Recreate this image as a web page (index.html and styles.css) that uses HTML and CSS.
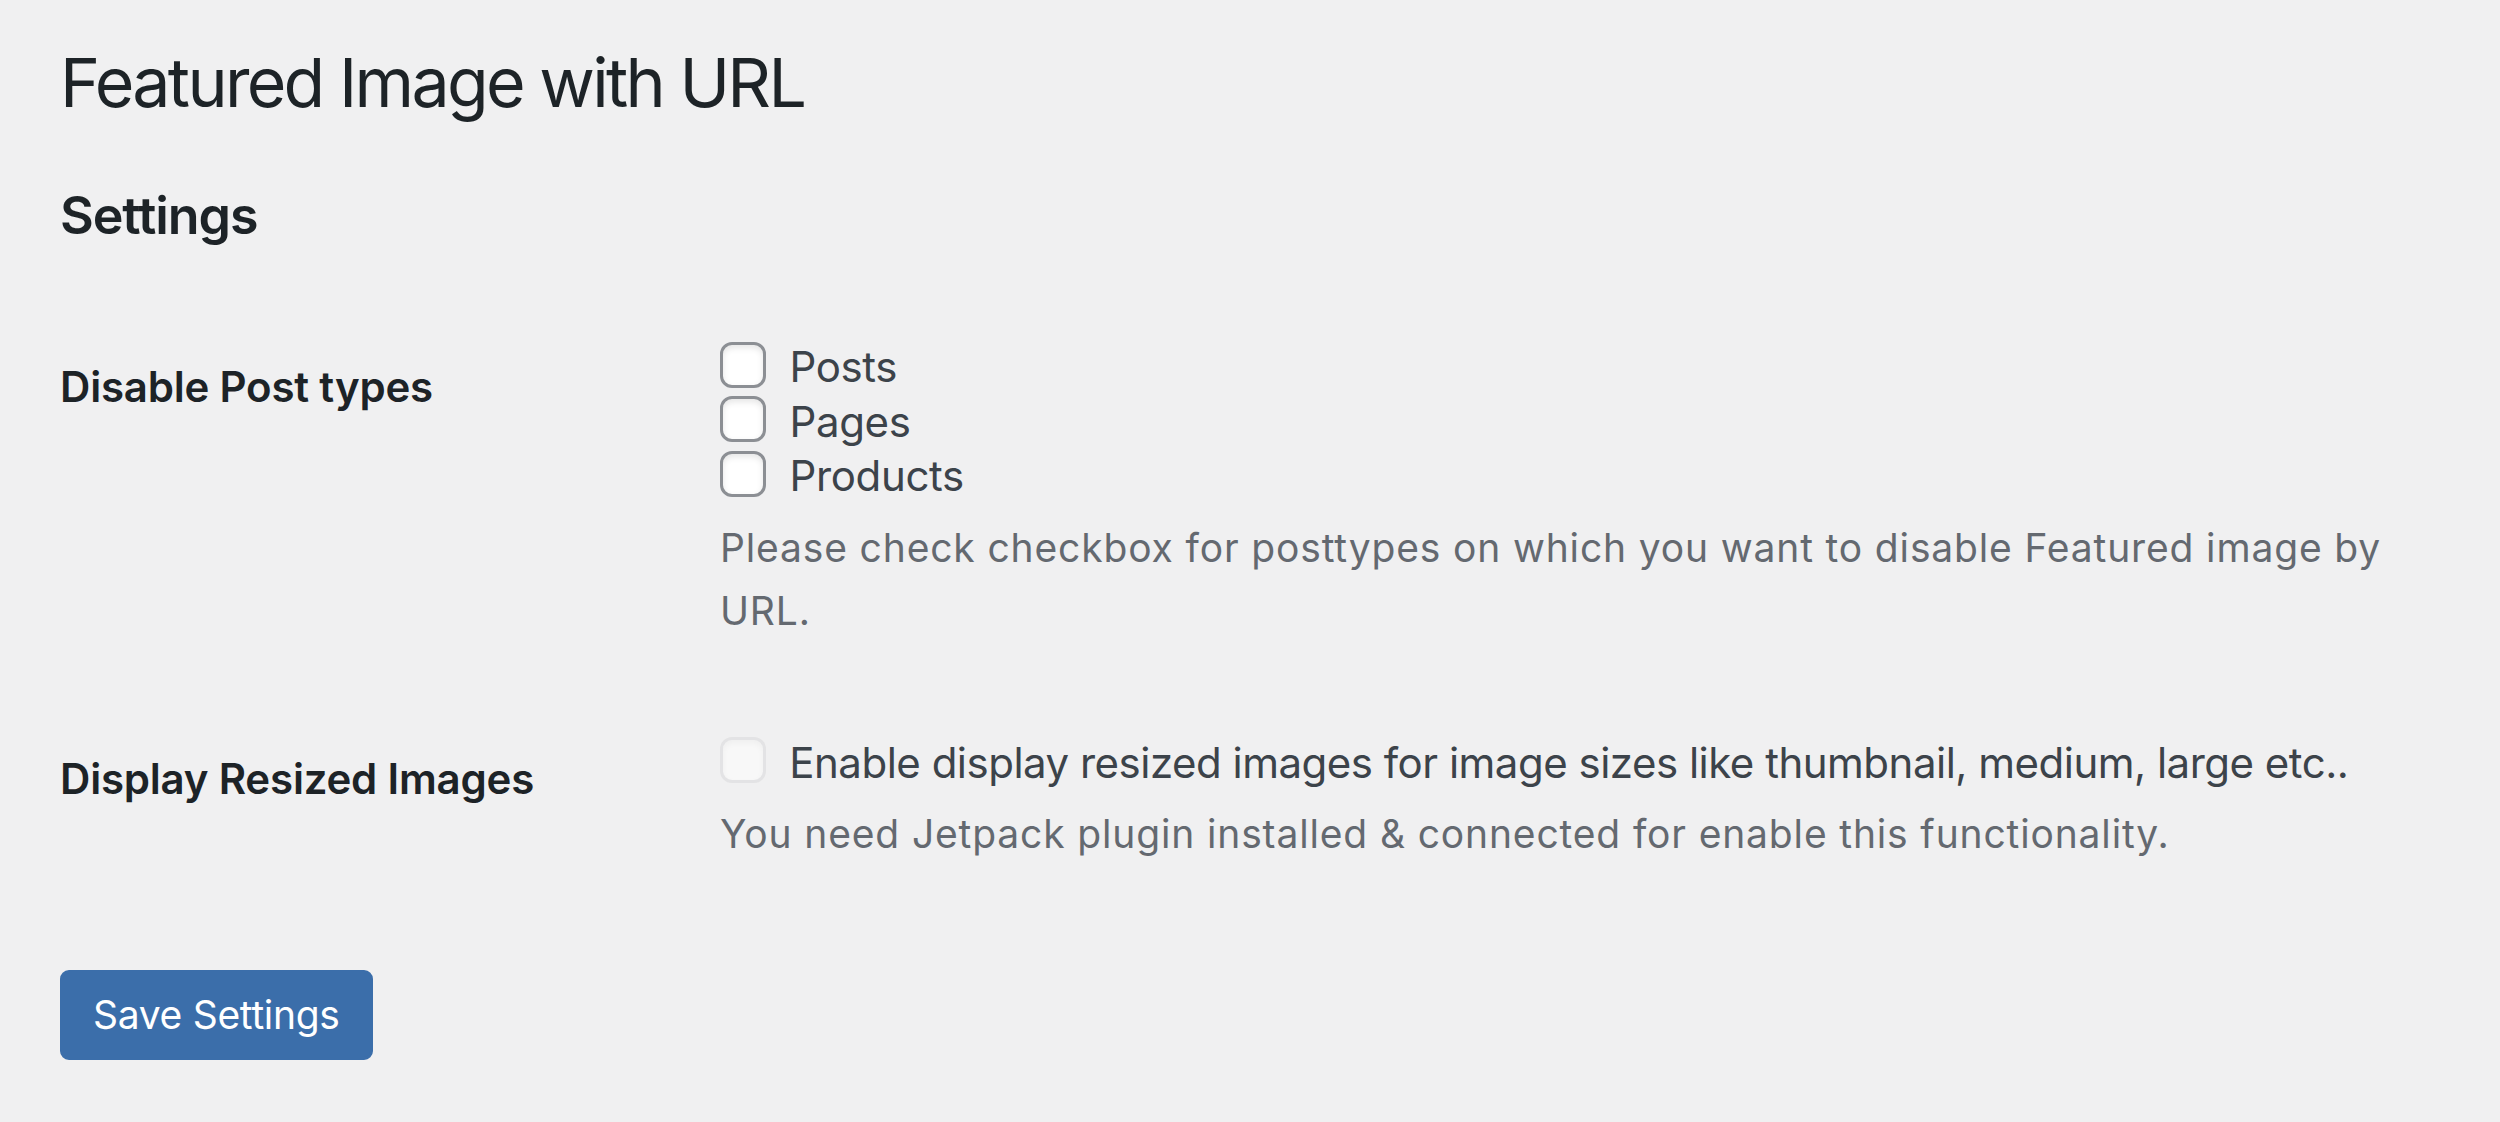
FILE: index.html
```html
<!DOCTYPE html>
<html lang="en">
<head>
<meta charset="utf-8">
<title>Featured Image with URL</title>
<link rel="stylesheet" href="styles.css">
</head>
<body>
<div class="wrap">
  <h1 class="page-title">Featured Image with URL</h1>
  <h2 class="section-title">Settings</h2>
  <form class="settings-form">
    <table class="form-table">
      <tbody>
        <tr>
          <th class="row-label" scope="row">Disable Post types</th>
          <td class="row-field">
            <label class="option"><input type="checkbox" class="cb"> Posts</label><br>
            <label class="option"><input type="checkbox" class="cb"> Pages</label><br>
            <label class="option"><input type="checkbox" class="cb"> Products</label>
            <p class="description">Please check checkbox for posttypes on which you want to disable Featured image by URL.</p>
          </td>
        </tr>
        <tr>
          <th class="row-label" scope="row">Display Resized Images</th>
          <td class="row-field row-field-single">
            <label class="option option-long"><input type="checkbox" class="cb" disabled> Enable display resized images for image sizes like thumbnail, medium, large etc..</label>
            <p class="description">You need Jetpack plugin installed &amp; connected for enable this functionality.</p>
          </td>
        </tr>
      </tbody>
    </table>
    <p class="submit"><button type="button" class="button-primary">Save Settings</button></p>
  </form>
</div>
</body>
</html>
```
FILE: styles.css
```css
html, body {
  margin: 0;
  padding: 0;
  background: #f0f0f1;
}

body {
  font-family: Inter, "Liberation Sans", sans-serif;
  color: #3c434a;
}

.wrap {
  padding: 38px 60px 0 60px;
}

.page-title {
  margin: 0;
  font-size: 68px;
  font-weight: 400;
  line-height: 88px;
  letter-spacing: -2.7px;
  color: #1d2327;
}

.section-title {
  margin: 62px 0 0 0;
  font-size: 52px;
  font-weight: 600;
  line-height: 56px;
  letter-spacing: -1.1px;
  color: #1d2327;
}

.settings-form {
  margin: 0;
}

.form-table {
  margin-top: 51px;
  width: 100%;
  border-collapse: collapse;
  border-spacing: 0;
}

.row-label {
  width: 600px;
  padding: 65px 30px 60px 0;
  text-align: left;
  vertical-align: top;
  font-size: 42px;
  line-height: 54.6px;
  font-weight: 600;
  letter-spacing: -0.2px;
  color: #1d2327;
}

.row-field {
  padding: 45px 30px;
  vertical-align: top;
  font-size: 42px;
  line-height: 54.6px;
  color: #3c434a;
}

.row-field-single {
  padding-top: 49px;
}

.option {
  color: #3c434a;
  letter-spacing: -0.35px;
}

.option-long {
  letter-spacing: -0.5px;
}

.cb {
  appearance: none;
  -webkit-appearance: none;
  box-sizing: border-box;
  width: 46px;
  height: 46px;
  margin: -12px 12px 0 0;
  border: 3px solid #8c8f94;
  border-radius: 12px;
  background: #fff;
  box-shadow: inset 0 3px 6px rgba(0, 0, 0, 0.1);
  vertical-align: middle;
}

.cb:disabled {
  border-color: rgba(220, 220, 222, 0.75);
  background: rgba(255, 255, 255, 0.5);
  box-shadow: inset 0 3px 6px rgba(0, 0, 0, 0.04);
}

.description {
  margin: 12px 0 0 0;
  font-size: 39px;
  line-height: 63px;
  letter-spacing: 0.85px;
  color: #646970;
}

.submit {
  margin: 60px 0 0 0;
  padding: 0;
}

.button-primary {
  box-sizing: border-box;
  height: 90px;
  padding: 0 30px;
  border: 3px solid #3b6eaa;
  border-radius: 9px;
  background: #3b6eaa;
  color: #fff;
  font-family: Inter, "Liberation Sans", sans-serif;
  font-size: 39px;
  line-height: 84px;
  font-weight: 400;
  letter-spacing: -0.3px;
  cursor: pointer;
}
```
